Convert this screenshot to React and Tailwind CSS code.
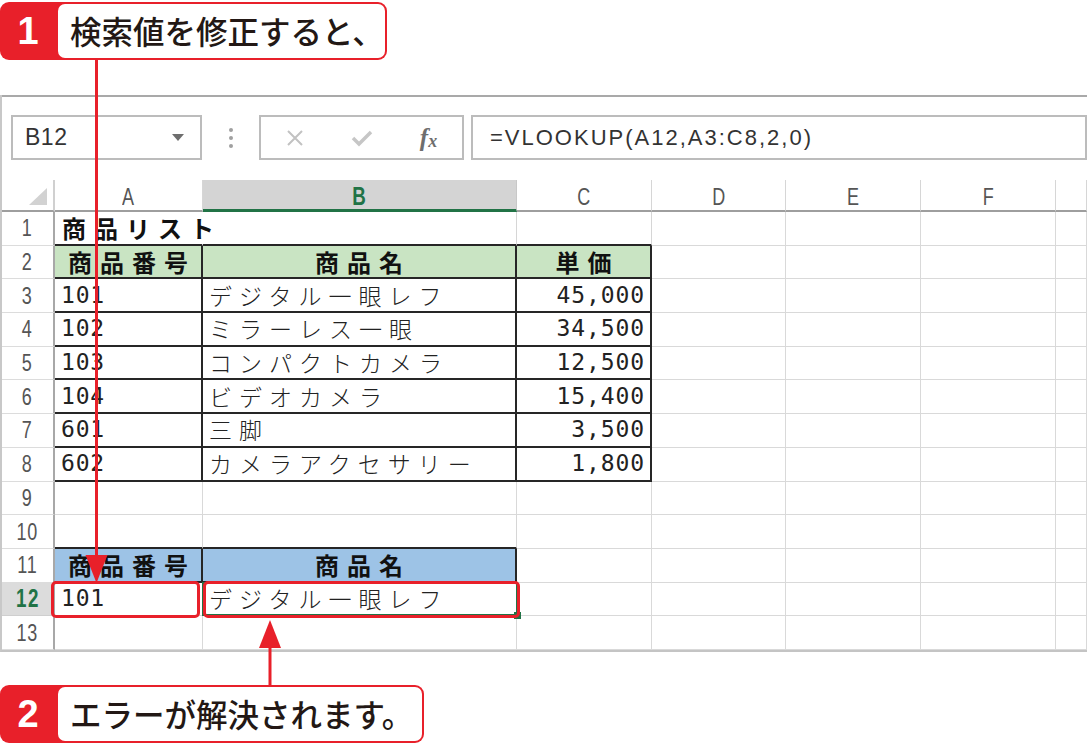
import React from "react";

const RED = "#e8202a";

function Callout({ num, text, width }) {
  return (
    <div className={`flex h-[58px] rounded-[9px] bg-[#e8202a] pr-[2px] py-[2px] ${width}`}>
      <div className="w-[58px] shrink-0 flex items-center justify-center text-white font-bold text-[38px] leading-none font-['Liberation_Sans',sans-serif] pr-[2px]">
        {num}
      </div>
      <div className="flex-1 bg-white rounded-[7px] flex items-center pl-[12px] text-[31.5px] font-medium leading-none text-[#231815] font-['Noto_Sans_CJK_JP',sans-serif]">
        {text}
      </div>
    </div>
  );
}

const data = {
  3: ["101", "デジタル一眼レフ", "45,000"],
  4: ["102", "ミラーレス一眼", "34,500"],
  5: ["103", "コンパクトカメラ", "12,500"],
  6: ["104", "ビデオカメラ", "15,400"],
  7: ["601", "三脚", "3,500"],
  8: ["602", "カメラアクセサリー", "1,800"],
};

function borderCls(r, c) {
  if (r === 1 && c === 0) return "border-b-2 border-b-[#262626] border-r border-r-transparent";
  if ((r >= 2 && r <= 8 && c <= 2) || (r === 11 && c <= 1)) return "border-r-2 border-b-2 border-[#262626]";
  if ((r === 1 && c <= 2) || (r === 10 && c <= 1)) return "border-r border-b-2 border-r-[#d6d6d6] border-b-[#262626]";
  return "border-r border-b border-[#d9d9d9]";
}

function bgCls(r, c) {
  if (r === 2 && c <= 2) return "bg-[#c9e4c3]";
  if (r === 11 && c <= 1) return "bg-[#9dc3e6]";
  return "";
}

const JP = "font-['Noto_Sans_CJK_JP',sans-serif]";

function CellContent({ r, c }) {
  if (r === 1 && c === 0)
    return (
      <span className={`${JP} font-bold text-[24px] tracking-[8px] whitespace-nowrap pl-[7px] leading-none text-[#111]`}>
        商品リスト
      </span>
    );
  if ((r === 2 && c <= 2) || (r === 11 && c <= 1)) {
    const t = c === 0 ? "商品番号" : c === 1 ? "商品名" : "単価";
    return (
      <div className="w-full flex justify-center pl-[8px]">
        <span className={`${JP} font-bold text-[24px] tracking-[8px] leading-none text-[#111]`}>{t}</span>
      </div>
    );
  }
  let row = data[r];
  if (r === 12) row = ["101", "デジタル一眼レフ", ""];
  if (!row || c > 2) return null;
  if (c === 0)
    return (
      <span className="font-['DejaVu_Sans_Mono',monospace] text-[23px] tracking-[0.8px] leading-none pl-[6px] text-[#222]">
        {row[0]}
      </span>
    );
  if (c === 1)
    return (
      <span className={`${JP} font-light text-[23px] tracking-[7px] leading-none pl-[6px] whitespace-nowrap text-[#222]`}>
        {row[1]}
      </span>
    );
  if (c === 2 && row[2])
    return (
      <div className="w-full flex justify-end pr-[5px]">
        <span className="font-['DejaVu_Sans_Mono',monospace] text-[23px] tracking-[0.9px] leading-none text-[#222]">
          {row[2]}
        </span>
      </div>
    );
  return null;
}

export default function App() {
  const colLetters = ["A", "B", "C", "D", "E", "F", ""];
  const rows = Array.from({ length: 13 }, (_, i) => i + 1);
  return (
    <div className="relative w-[1087px] h-[745px] bg-white overflow-hidden flex flex-col">
      {/* callout 1 */}
      <div className="mt-[2px]">
        <Callout num="1" text="検索値を修正すると、" width="w-[387px]" />
      </div>

      {/* spreadsheet */}
      <div className="mt-[35px] border-l-2 border-l-[#c8c8c8] border-b-2 border-b-[#c4c4c4]">
        {/* top panel */}
        <div className="h-[85px] w-[1085px] border-t-2 border-t-[#a9a9a9] pt-[18px] pl-[9px] flex items-start">
          <div className="w-[191px] h-[45px] border-2 border-[#bcbcbc] flex items-center justify-between pl-[12px] pr-[16px]">
            <span className="font-['Liberation_Sans',sans-serif] text-[23px] leading-none text-[#333] tracking-[0.5px]">B12</span>
            <svg width="12" height="7" viewBox="0 0 12 7">
              <polygon points="0,0 12,0 6,7" fill="#6e6e6e" />
            </svg>
          </div>
          <div className="w-[57px] h-[45px] flex flex-col items-center justify-center gap-[4px]">
            <div className="w-[4px] h-[4px] rounded-full bg-[#a0a0a0]" />
            <div className="w-[4px] h-[4px] rounded-full bg-[#a0a0a0]" />
            <div className="w-[4px] h-[4px] rounded-full bg-[#a0a0a0]" />
          </div>
          <div className="w-[205px] h-[45px] border-2 border-[#bcbcbc] flex items-center">
            <div className="w-[68px] flex justify-center">
              <svg width="18" height="18" viewBox="0 0 18 18">
                <path d="M2 2 L16 16 M16 2 L2 16" stroke="#c2c2c2" strokeWidth="2" />
              </svg>
            </div>
            <div className="w-[68px] flex justify-center">
              <svg width="22" height="18" viewBox="0 0 22 18">
                <path d="M2 9 L8 15 L20 3" stroke="#c6c6c6" strokeWidth="3.5" fill="none" />
              </svg>
            </div>
            <div className="w-[68px] flex justify-center items-end">
              <span className="font-['Liberation_Serif',serif] italic font-bold text-[25px] leading-none text-[#6e6e6e]">f</span>
              <span className="font-['Liberation_Serif',serif] italic font-bold text-[18px] leading-none text-[#6e6e6e]">x</span>
            </div>
          </div>
          <div className="ml-[7px] flex-1 h-[45px] border-2 border-[#bcbcbc] flex items-center pl-[17px]">
            <span className="font-['Liberation_Sans',sans-serif] text-[22px] leading-none text-[#333] tracking-[2px]">
              =VLOOKUP(A12,A3:C8,2,0)
            </span>
          </div>
        </div>

        {/* grid */}
        <div className="grid grid-cols-[53px_148px_314px_135px_134px_135px_135px_31px]">
          {/* header row */}
          <div className="relative h-[32px] border-r-2 border-r-[#d0d0d0] border-b-2 border-b-[#9e9e9e]">
            <svg className="absolute right-[6px] bottom-[5px]" width="18" height="17" viewBox="0 0 18 17">
              <polygon points="18,0 18,17 0,17" fill="#d2d2d2" />
            </svg>
          </div>
          {colLetters.map((l, i) => (
            <div
              key={i}
              className={
                i === 1
                  ? "h-[32px] flex items-center justify-center bg-[#d4d4d4] border-r border-r-[#c8c8c8] border-b-[3px] border-b-[#217346]"
                  : "h-[32px] flex items-center justify-center border-r border-r-[#d6d6d6] border-b-2 border-b-[#9e9e9e]"
              }
            >
              <span
                className={
                  i === 1
                    ? "inline-block scale-x-75 font-['Liberation_Sans',sans-serif] font-bold text-[25px] leading-none text-[#217346] pt-[3px]"
                    : "inline-block scale-x-75 font-['Liberation_Sans',sans-serif] text-[24px] leading-none text-[#555] pt-[3px]"
                }
              >
                {l}
              </span>
            </div>
          ))}

          {rows.map((r) => (
            <React.Fragment key={r}>
              <div
                className={
                  r === 12
                    ? "h-[33.7px] flex items-center justify-center bg-[#dcdcdc] border-r-2 border-r-[#a8a8a8] border-b border-b-[#cfcfcf]"
                    : "h-[33.7px] flex items-center justify-center border-r-2 border-r-[#a8a8a8] border-b border-b-[#dcdcdc]"
                }
              >
                <span
                  className={
                    r === 12
                      ? "inline-block scale-x-75 font-['Liberation_Sans',sans-serif] font-bold text-[25px] leading-none text-[#217346] tracking-[2px]"
                      : "inline-block scale-x-75 font-['Liberation_Sans',sans-serif] text-[24px] leading-none text-[#555] tracking-[1px]"
                  }
                >
                  {r}
                </span>
              </div>
              {[0, 1, 2, 3, 4, 5, 6].map((c) => (
                <div
                  key={c}
                  className={`relative h-[33.7px] flex items-center overflow-visible ${borderCls(r, c)} ${bgCls(r, c)} ${r === 1 && c === 0 ? "z-[1]" : ""}`}
                >
                  <CellContent r={r} c={c} />
                  {r === 12 && c === 0 && (
                    <div className="absolute left-[-4px] right-[2px] top-[-2px] bottom-[-3px] border-[3px] border-[#e8202a] rounded-[5px] z-[2]" />
                  )}
                  {r === 12 && c === 1 && (
                    <>
                      <div className="absolute left-[-1px] right-[-2px] top-[-1px] bottom-[-1px] border-2 border-[#217346] z-[2]" />
                      <div className="absolute right-[-5px] bottom-[-4px] w-[7px] h-[7px] bg-[#217346] z-[3]" />
                      <div className="absolute left-[0px] right-[-4px] top-[-2px] bottom-[-3px] border-[3px] border-[#e8202a] rounded-[5px] z-[4]" />
                    </>
                  )}
                </div>
              ))}
            </React.Fragment>
          ))}
        </div>
      </div>

      {/* callout 2 */}
      <div className="mt-[33px]">
        <Callout num="2" text="エラーが解決されます。" width="w-[424px]" />
      </div>

      {/* arrows overlay */}
      <svg className="absolute inset-0 pointer-events-none z-10" width="1087" height="745" viewBox="0 0 1087 745">
        <line x1="96.5" y1="59" x2="96.5" y2="560" stroke={RED} strokeWidth="3" />
        <polygon points="85.5,555 107.5,555 96.5,583" fill={RED} />
        <line x1="270" y1="645" x2="270" y2="687" stroke={RED} strokeWidth="3" />
        <polygon points="270,620 259,648 281,648" fill={RED} />
      </svg>
    </div>
  );
}
